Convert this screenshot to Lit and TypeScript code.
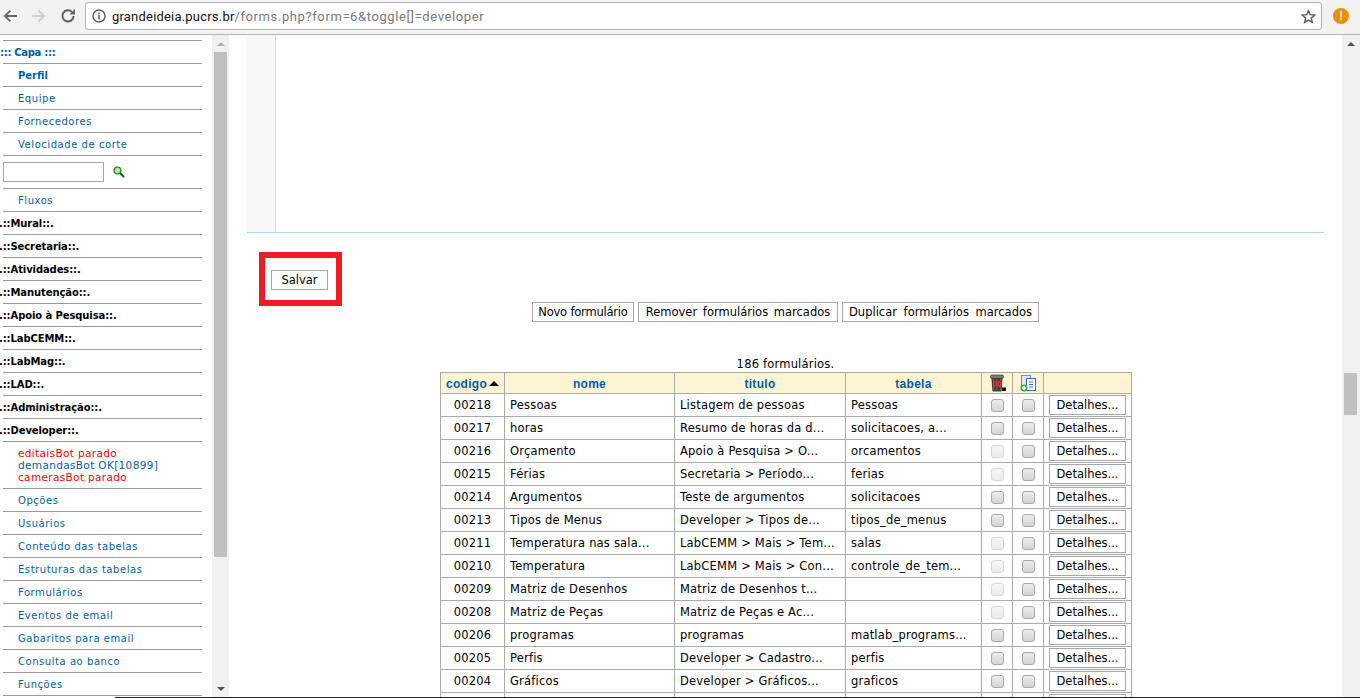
import { LitElement, html, css, svg } from "lit";
import { customElement } from "lit/decorators.js";

type Row = [string, string, string, string, boolean];
const rows: Row[] = [
  ["00218", "Pessoas", "Listagem de pessoas", "Pessoas", false],
  ["00217", "horas", "Resumo de horas da d...", "solicitacoes, a...", false],
  ["00216", "Orçamento", "Apoio à Pesquisa > O...", "orcamentos", true],
  ["00215", "Férias", "Secretaria > Período...", "ferias", true],
  ["00214", "Argumentos", "Teste de argumentos", "solicitacoes", false],
  ["00213", "Tipos de Menus", "Developer > Tipos de...", "tipos_de_menus", false],
  ["00211", "Temperatura nas sala...", "LabCEMM > Mais > Tem...", "salas", true],
  ["00210", "Temperatura", "LabCEMM > Mais > Con...", "controle_de_tem...", true],
  ["00209", "Matriz de Desenhos", "Matriz de Desenhos t...", "", true],
  ["00208", "Matriz de Peças", "Matriz de Peças e Ac...", "", true],
  ["00206", "programas", "programas", "matlab_programs...", false],
  ["00205", "Perfis", "Developer > Cadastro...", "perfis", false],
  ["00204", "Gráficos", "Developer > Gráficos...", "graficos", false],
  ["", "", "", "", false],
];

type Item = { t: string; k?: string };
const menu: Item[] = [
  { t: "::: Capa :::", k: "cap" },
  { t: "Perfil", k: "cur" },
  { t: "Equipe" },
  { t: "Fornecedores" },
  { t: "Velocidade de corte" },
  { t: "", k: "search" },
  { t: "Fluxos" },
  { t: ".::Mural::.", k: "sec" },
  { t: ".::Secretaria::.", k: "sec" },
  { t: ".::Atividades::.", k: "sec" },
  { t: ".::Manutenção::.", k: "sec" },
  { t: ".::Apoio à Pesquisa::.", k: "sec" },
  { t: ".::LabCEMM::.", k: "sec" },
  { t: ".::LabMag::.", k: "sec" },
  { t: ".::LAD::.", k: "sec" },
  { t: ".::Administração::.", k: "sec" },
  { t: ".::Developer::.", k: "sec" },
  { t: "", k: "bots" },
  { t: "Opções" },
  { t: "Usuários" },
  { t: "Conteúdo das tabelas" },
  { t: "Estruturas das tabelas" },
  { t: "Formulários" },
  { t: "Eventos de email" },
  { t: "Gabaritos para email" },
  { t: "Consulta ao banco" },
  { t: "Funções" },
];

const back = svg`<path d="M15 7H3.2M8.4 1.6 3 7l5.4 5.4" fill="none" stroke="currentColor" stroke-width="2"/>`;
const fwd = svg`<path d="M0 7h11.8M6.6 1.6 12 7l-5.4 5.4" fill="none" stroke="currentColor" stroke-width="2"/>`;

@customElement("app-root")
export class AppRoot extends LitElement {
  static styles = css`
    :host { display: block; width: 1360px; height: 698px; overflow: hidden; background: #fff; font-family: "DejaVu Sans", Verdana, sans-serif; position: relative; }
    .chrome { height: 34px; box-sizing: content-box; background: #f2f2f2; border-bottom: 1px solid #b4b4b4; display: flex; align-items: flex-start; }
    .nav { flex: none; display: block; margin-top: 9px; }
    .nav.bk { width: 16px; height: 14px; margin-left: 2px; color: #6a6a6a; }
    .nav.fw { width: 14px; height: 14px; margin-left: 14px; color: #cfcfcf; }
    .nav.re { width: 16px; height: 16px; margin-left: 14px; margin-top: 8px; color: #5f5f5f; }
    .omni { margin-left: 9px; margin-top: 2px; width: 1237px; height: 28px; box-sizing: border-box; background: #fff; border: 1px solid #b0b0b0; border-radius: 3px; display: flex; align-items: center; font: 13px "Roboto", "Liberation Sans", sans-serif; letter-spacing: 0.6px; color: #777; }
    .info { width: 14px; height: 14px; margin-left: 6px; margin-right: 6px; flex: none; }
    .host { color: #111; letter-spacing: 0.2px; }
    .url { flex: 1; white-space: pre; }
    .star { width: 15px; height: 15px; margin-right: 5px; flex: none; }
    .alert { width: 16px; height: 16px; margin-left: 11px; margin-top: 8px; flex: none; background: #f28c00; border-radius: 50%; display: flex; align-items: center; justify-content: center; color: #fff; font: bold 12px "Liberation Sans", sans-serif; }

    .page { display: flex; height: 663px; }
    .side { width: 212px; flex: none; overflow: hidden; padding-top: 5px; box-sizing: border-box; }
    .item { margin-left: 3px; width: 199px; box-sizing: border-box; height: 23px; border-bottom: 1px solid #999; color: #0060a8; font-size: 10px; letter-spacing: 0.55px; line-height: 24px; padding-left: 15px; white-space: nowrap; }
    .item.cur { font-weight: bold; letter-spacing: 0; }
    .item.cap, .item.sec { font-weight: bold; margin-left: 0; width: 202px; height: 22px; border-bottom: 0; }
    .item.cap { padding-left: 0; letter-spacing: -0.3px; }
    .item.sec { padding-left: 0; margin-left: -1px; color: #000; letter-spacing: -0.1px; }
    .rule { margin-left: 3px; width: 199px; height: 1px; background: #999; }
    .item.search { height: 33px; display: flex; align-items: center; padding: 0; }
    .search .box { width: 101px; height: 20px; box-sizing: border-box; border: 1px solid #a5a5ad; background: #fff; }
    .search svg { width: 12px; height: 12px; margin-left: 9px; margin-top: -1px; }
    .item.bots { height: 47px; line-height: 12px; padding-top: 5px; font-size: 10.5px; letter-spacing: 0.35px; }
    .red { color: #f00; }

    .sb { width: 17px; flex: none; background: #f0f0f0; position: relative; }
    .sb.r { width: 18px; }
    .sb .thumb { position: absolute; background: #bfbfbf; left: 2px; right: 2px; }
    .sb.r .thumb { right: 3px; }
    .sb .up, .sb .dn { position: absolute; left: 5px; width: 0; height: 0; border-left: 4px solid transparent; border-right: 4px solid transparent; }
    .sb .up { top: 7px; border-bottom: 4px solid #b0b0b0; }
    .sb .dn { bottom: 7px; border-top: 4px solid #505050; }
    .sb.r .up { border-bottom-color: #505050; }
    .t1 { top: 17px; height: 505px; }
    .t2 { top: 338px; height: 42px; }

    .main { flex: 1; min-width: 0; overflow: hidden; padding: 0 18px 0 18px; }
    .editor { height: 198px; border-bottom: 1px solid #a8dce4; box-sizing: border-box; }
    .gutter { width: 29px; height: 197px; box-sizing: border-box; background: #f7f7f7; border-right: 1px solid #ddd; }
    .save { height: 69px; display: flex; align-items: center; padding-left: 24px; position: relative; padding-top: 25px; box-sizing: border-box; }
    .mark { position: absolute; left: 12px; top: 19px; width: 83px; height: 54px; box-sizing: border-box; border: 6px solid #ed1c24; pointer-events: none; }
    button { height: 20px; box-sizing: border-box; background: #fff; border: 1px solid #a5a5ad; padding: 0; font: 11.5px "DejaVu Sans", sans-serif; color: #000; border-radius: 0; white-space: nowrap; }
    .b-save { width: 57px; }
    .actions { display: flex; justify-content: center; height: 20px; gap: 4px; width: 1077px; }
    .b1 { width: 102px; letter-spacing: -0.2px; }
    .b2 { width: 200px; word-spacing: 2px; }
    .b3 { width: 197px; word-spacing: 3px; }
    .count { margin-top: 34px; text-align: center; font-size: 11.5px; height: 16px; line-height: 16px; letter-spacing: 0.2px; width: 1077px; }
    table { border-collapse: collapse; table-layout: fixed; width: 691px; margin-left: 193px; font-size: 11.5px; }
    th, td { border: 1px solid #aaa; padding: 0; box-sizing: border-box; white-space: nowrap; overflow: hidden; }
    th { background: #fdf4d3; color: #0060a8; font: bold 12px "Liberation Sans", sans-serif; letter-spacing: 0.3px; text-align: center; height: 21px; padding-top: 2px; }
    th.ic { padding-top: 0; }
    td { height: 23px; padding-left: 5px; letter-spacing: 0.2px; }
    td.c { padding-left: 0; text-align: center; }
    th svg { display: inline-block; vertical-align: middle; }
    .arrow { display: inline-block; width: 0; height: 0; border-left: 5px solid transparent; border-right: 5px solid transparent; border-bottom: 5px solid #000; margin-left: 2px; vertical-align: 2px; }
    .cb { display: block; margin: 0 auto; width: 13px; height: 13px; box-sizing: border-box; border: 1px solid #a9a9a9; border-radius: 3px; background: linear-gradient(#ececec, #d4d4d4); }
    .cb.off { border-color: #d8d8d8; background: linear-gradient(#f6f6f6, #ebebeb); }
    .det { width: 77px; height: 20px; display: block; margin: 0 0 0 5px; }
    .taskbar { position: absolute; left: 115px; right: 0; bottom: 0; height: 1px; background: #222; }
  `;

  renderMenu() {
    return menu.map((m, i) => {
      if (m.k === "search")
        return html`<div class="item search">
          <div class="box"></div>
          <svg viewBox="0 0 12 12"><circle cx="4.5" cy="4.5" r="3.4" fill="#b8e0b0" stroke="#2a8a2a" stroke-width="1.4"/><path d="M7 7l4 4" stroke="#0a5a0a" stroke-width="2"/></svg>
        </div>`;
      if (m.k === "bots")
        return html`<div class="item bots">
          <div class="red">editaisBot parado</div>
          <div>demandasBot OK[10899]</div>
          <div class="red">camerasBot parado</div>
        </div>`;
      const cap = m.k === "cap" || m.k === "sec";
      return html`${i === 0 ? html`<div class="rule"></div>` : ""}
        <div class="item ${m.k ?? ""}">${m.t}</div>
        ${cap ? html`<div class="rule"></div>` : ""}`;
    });
  }

  render() {
    return html`
      <div class="chrome">
        <svg class="nav bk" viewBox="0 0 16 14">${back}</svg>
        <svg class="nav fw" viewBox="0 0 14 14">${fwd}</svg>
        <svg class="nav re" viewBox="0 0 16 16"><path d="M13.6 8a5.6 5.6 0 1 1-1.6-4" fill="none" stroke="currentColor" stroke-width="2"/><path d="M9.5 6.5H15V1z" fill="currentColor"/></svg>
        <div class="omni">
          <svg class="info" viewBox="0 0 14 14"><circle cx="7" cy="7" r="6" fill="none" stroke="#5a5a5a" stroke-width="1.4"/><rect x="6.2" y="6" width="1.6" height="4.4" fill="#5a5a5a"/><rect x="6.2" y="3.6" width="1.6" height="1.6" fill="#5a5a5a"/></svg>
          <span class="url"><span class="host">grandeideia.pucrs.br</span>/forms.php?form=6&toggle[]=developer</span>
          <svg class="star" viewBox="0 0 15 15"><path d="M7.5 1.6 9.2 5.7l4.5.4-3.4 2.9 1 4.4-3.8-2.3-3.8 2.3 1-4.4L1.3 6.1l4.5-.4z" fill="none" stroke="#5a5a5a" stroke-width="1.4"/></svg>
        </div>
        <div class="alert">!</div>
      </div>
      <div class="page">
        <nav class="side">${this.renderMenu()}</nav>
        <div class="sb"><span class="up"></span><span class="thumb t1"></span><span class="dn"></span></div>
        <main class="main">
          <div class="editor"><div class="gutter"></div></div>
          <div class="save">
            <button class="b-save">Salvar</button>
            <div class="mark"></div>
          </div>
          <div class="actions">
            <button class="b1">Novo formulário</button>
            <button class="b2">Remover formulários marcados</button>
            <button class="b3">Duplicar formulários marcados</button>
          </div>
          <div class="count">186 formulários.</div>
          <table>
            <colgroup>
              <col style="width:64px"><col style="width:170px"><col style="width:171px"><col style="width:136px"><col style="width:31px"><col style="width:31px"><col style="width:88px">
            </colgroup>
            <thead>
              <tr>
                <th>codigo<span class="arrow"></span></th><th>nome</th><th>titulo</th><th>tabela</th>
                <th class="ic"><svg width="17" height="18" viewBox="0 0 17 18"><path d="M2.5 4h11l-.8 12.5a1 1 0 0 1-1 1h-7.400a1 1 0 0 1-1-1z" fill="#3d4238"/><path d="M4.500 5v11M8 5v11M11.500 5v11" stroke="#6d7264" stroke-width="1"/><rect x="1.500" y="1" width="13" height="3.400" rx="1.200" fill="#7a7f70" stroke="#2c2f28" stroke-width=".6"/><path d="M4 6.500l8 7M12 6.500l-8 7" stroke="#e8202a" stroke-width="1.700"/><rect x="13" y="13.500" width="4" height="3.500" fill="#111"/></svg></th>
                <th class="ic"><svg width="17" height="18" viewBox="0 0 17 18"><rect x="1.500" y="1.500" width="9" height="12" fill="#dbe8f6" stroke="#6a8fc0"/><rect x="6.500" y="4.500" width="9" height="12" fill="#fff" stroke="#2f6fc8"/><path d="M9 8h4M9 10.500h4M9 13h4" stroke="#2f6fc8"/><circle cx="4" cy="14" r="3.600" fill="#3cb043"/><path d="M2 14h4M4 12v4" stroke="#fff" stroke-width="1.400"/></svg></th>
                <th></th>
              </tr>
            </thead>
            <tbody>
              ${rows.map(
                (r) => html`<tr>
                  <td class="c">${r[0]}</td><td>${r[1]}</td><td>${r[2]}</td><td>${r[3]}</td>
                  <td class="c"><span class="cb ${r[4] ? "off" : ""}"></span></td>
                  <td class="c"><span class="cb"></span></td>
                  <td class="c"><button class="det">${r[0] ? "Detalhes..." : ""}</button></td>
                </tr>`
              )}
            </tbody>
          </table>
        </main>
        <div class="sb r"><span class="up"></span><span class="thumb t2"></span></div>
      </div>
      <div class="taskbar"></div>
    `;
  }
}
